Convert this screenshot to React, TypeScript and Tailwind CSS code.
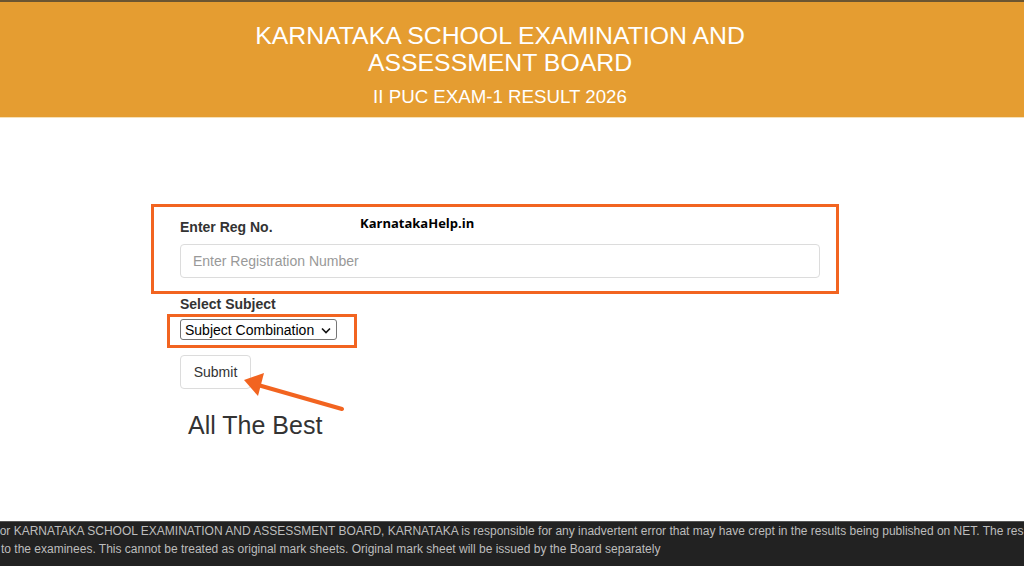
import React from "react";

export default function App() {
  return (
    <div
      className="relative flex h-[566px] w-[1024px] flex-col overflow-hidden bg-white"
      style={{ fontFamily: '"Liberation Sans", Arial, sans-serif' }}
    >
      {/* Header */}
      <header className="h-[118px] shrink-0 border-t-[2px] border-b border-t-[#6b5531] border-b-[#f6e1b8] bg-[#e59d31] pr-[24px] text-center text-white">
        <div className="pt-[20px] text-[24.8px] leading-[27px]">
          KARNATAKA SCHOOL EXAMINATION AND
          <br />
          ASSESSMENT BOARD
        </div>
        <div className="mt-[9px] text-[18.7px] leading-[24px]">II PUC EXAM-1 RESULT 2026</div>
      </header>

      {/* Main */}
      <main className="flex-1">
        <div className="ml-[180px] w-[640px] pt-[99px]">
          <div className="text-[14px] font-bold leading-[20px] text-[#333]">Enter Reg No.</div>
          <div className="mt-[7px] flex h-[34px] items-center rounded-[4px] border border-[#dcdcdc] px-[12px] text-[14px] text-[#999]">
            Enter Registration Number
          </div>
          <div className="mt-[16px] text-[14px] font-bold leading-[20px] text-[#333]">Select Subject</div>
          <div className="mt-[5px] flex h-[21px] w-[157px] items-center justify-between rounded-[3px] border border-[#767676] pl-[4px] pr-[5px] pt-[1px] text-[14px] text-black">
            <span>Subject Combination</span>
            <svg width="10" height="7" viewBox="0 0 10 7" className="mt-[1px]">
              <path d="M1 1.5 L5 5.5 L9 1.5" fill="none" stroke="#111" strokeWidth="1.6" />
            </svg>
          </div>
          <div className="mt-[15px] flex h-[34px] w-[71px] items-center justify-center rounded-[4px] border border-[#dcdcdc] pt-[1px] text-[14px] text-[#333]">
            Submit
          </div>
          <div className="ml-[8px] mt-[20px] text-[25px] leading-[32px] text-[#333]">All The Best</div>
        </div>
      </main>

      {/* Footer */}
      <footer className="h-[45px] shrink-0 overflow-hidden border-t border-[#555] bg-[#222] text-[12px] leading-[18px] text-[#bdbdbd]">
        <div className="ml-[-7px] whitespace-nowrap">
          nor KARNATAKA SCHOOL EXAMINATION AND ASSESSMENT BOARD, KARNATAKA is responsible for any inadvertent error that may have crept in the results being published on NET. The res
        </div>
        <div className="ml-[1px] whitespace-nowrap">
          to the examinees. This cannot be treated as original mark sheets. Original mark sheet will be issued by the Board separately
        </div>
      </footer>

      {/* Annotation overlays */}
      <div className="pointer-events-none absolute left-[151px] top-[204px] h-[90px] w-[688px] border-[3px] border-[#f26420]" />
      <div className="pointer-events-none absolute left-[167px] top-[314px] h-[34px] w-[190px] border-[3px] border-[#f26420]" />
      <div
        className="pointer-events-none absolute left-[360px] top-[214px] text-[13px] font-bold leading-[18px] text-black"
        style={{ fontFamily: '"Open Sans", sans-serif' }}
      >
        KarnatakaHelp.in
      </div>
      <svg className="pointer-events-none absolute left-0 top-0" width="1024" height="566">
        <line x1="342" y1="409" x2="258" y2="385" stroke="#f26420" strokeWidth="4" strokeLinecap="round" />
        <polygon points="244,380 264,373 258,396" fill="#f26420" />
      </svg>
    </div>
  );
}
